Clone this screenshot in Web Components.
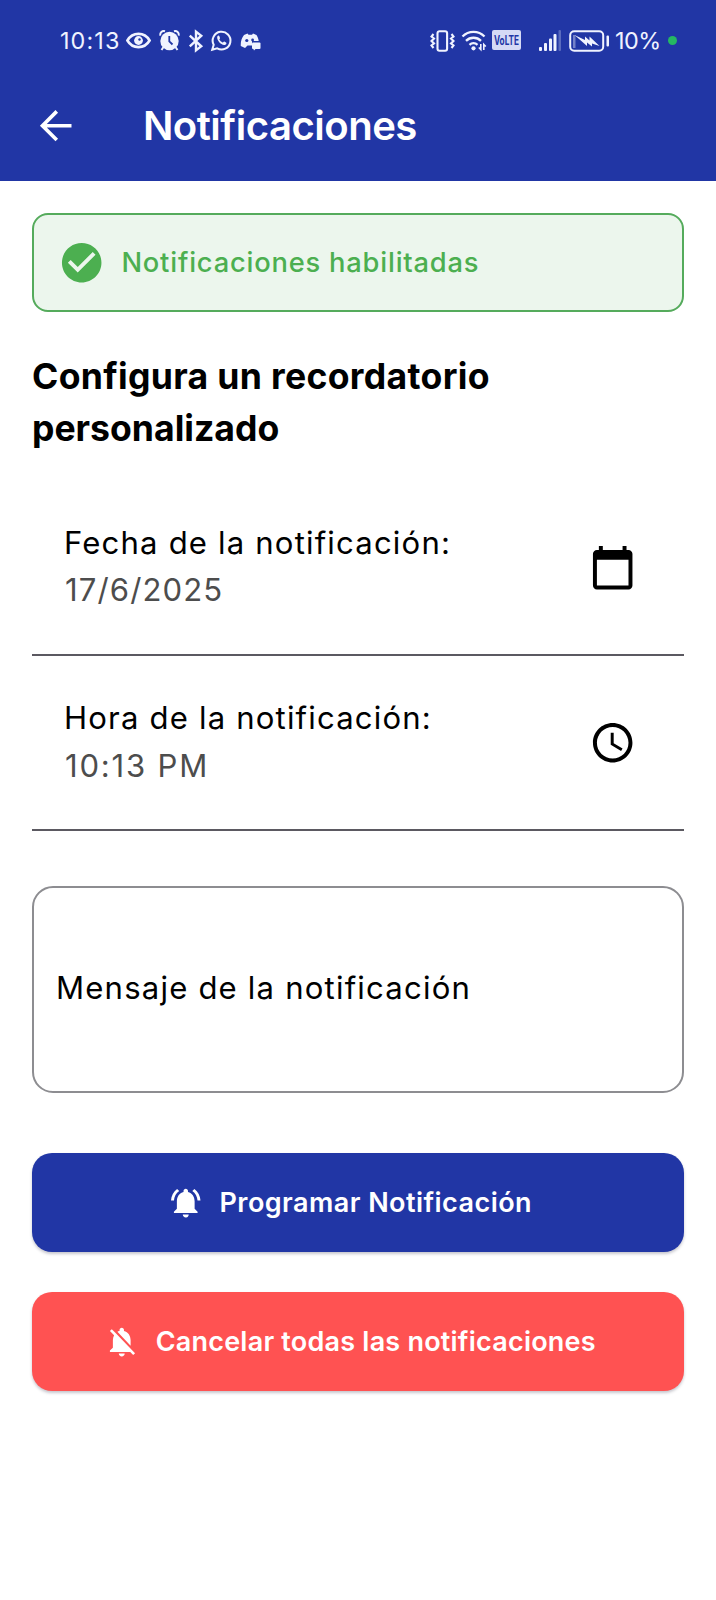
<!DOCTYPE html>
<html lang="es">
<head>
<meta charset="utf-8">
<title>Notificaciones</title>
<style>
body{margin:0;background:#fff;font-family:Inter,"Noto Sans",sans-serif;font-variant-ligatures:none;color:#000}
</style>
</head>
<body>
<notifications-page></notifications-page>
<script>
const define = (name, html) => {
  const template = document.createElement('template');
  template.innerHTML = html;
  customElements.define(name, class extends HTMLElement {
    constructor() {
      super();
      this.attachShadow({ mode: 'open' }).append(template.content.cloneNode(true));
    }
  });
};

const ICONS = {
  back: 'M20 11.100H7.500l5.700-5.700L11.900 4.100l-7.900 7.900 7.900 7.900 1.300-1.300L7.500 12.900H20v-1.800z',
  check: 'M12 2C6.480 2 2 6.480 2 12s4.480 10 10 10 10-4.480 10-10S17.520 2 12 2zm-2 15l-5-5 1.410-1.410L10 14.170l7.590-7.590L19 8l-9 9z',
  calendar: 'M20 3h-1V1h-2v2H7V1H5v2H4c-1.100 0-2 .9-2 2v16c0 1.100.9 2 2 2h16c1.100 0 2-.9 2-2V5c0-1.100-.9-2-2-2zm0 18H4V8h16v13z',
  clock: 'M11.990 2C6.470 2 2 6.480 2 12s4.470 10 9.990 10C17.520 22 22 17.520 22 12S17.520 2 11.990 2zM12 20c-4.420 0-8-3.580-8-8s3.580-8 8-8 8 3.580 8 8-3.580 8-8 8zm.5-13H11v6l5.250 3.150.75-1.230-4.500-2.670z',
  bell: 'M7.580 4.080L6.150 2.650C3.750 4.480 2.170 7.300 2.030 10.500h2c.15-2.650 1.510-4.970 3.550-6.420zm12.390 6.420h2c-.15-3.200-1.730-6.020-4.120-7.850l-1.420 1.430c2.020 1.450 3.390 3.770 3.540 6.420zM18 11c0-3.070-1.640-5.640-4.500-6.320V4c0-.83-.67-1.500-1.500-1.500s-1.500.67-1.500 1.500v.68C7.630 5.360 6 7.920 6 11v5l-2 2v1h16v-1l-2-2v-5zm-6 11c.14 0 .27-.01.4-.04.65-.14 1.180-.58 1.440-1.180.1-.24.15-.5.15-.78h-4c.01 1.100.9 2 2.010 2z',
  belloff: 'M20 18.690L7.840 6.140 5.270 3.490 4 4.760l2.800 2.800v.01c-.52.99-.8 2.160-.8 3.420v5l-2 2v1h13.730l2 2L21 19.720l-1-1.030zM12 22c1.110 0 2-.89 2-2h-4c0 1.110.89 2 2 2zm6-7.320V11c0-3.080-1.640-5.640-4.500-6.320V4c0-.83-.67-1.500-1.500-1.500s-1.500.67-1.500 1.500v.68c-.15.03-.29.08-.42.12-.1.03-.2.07-.3.11h-.01c-.01 0-.01 0-.02.01-.23.09-.46.2-.68.31 0 0-.01 0-.01.01L18 14.680z'
};

customElements.define('app-icon', class extends HTMLElement {
  connectedCallback() {
    if (this.shadowRoot) return;
    this.attachShadow({ mode: 'open' }).innerHTML = `
      <style>:host{display:block;flex:none;width:47.4px;height:47.4px}svg{display:block;width:100%;height:100%}</style>
      <svg viewBox="0 0 24 24" fill="currentColor"><path d="${ICONS[this.getAttribute('name')]}"/></svg>`;
  }
});

define('status-bar', `
<style>
:host{display:flex;align-items:center;box-sizing:border-box;height:70px;padding:11px 39px 0 60px;color:#f0f3ff}
svg{display:block;flex:none;overflow:visible}
.time,.pct{font-size:23.4px;line-height:28px;white-space:nowrap}
.time{width:59px;letter-spacing:1.1px}
.pct{width:44px;letter-spacing:-.45px;margin-left:5px}
.right{display:flex;align-items:center;margin-left:auto}
.dot{width:9px;height:9px;border-radius:50%;background:#25b862;margin-left:9px}
</style>
<span class="time">10:13</span>
<svg style="margin-left:7px" width="25" height="17" viewBox="0 0 25 16" fill="none" stroke="currentColor" stroke-width="2.6"><path d="M1.4 8C4 3.6 8 1.4 12.5 1.4S21 3.6 23.6 8C21 12.400 17 14.600 12.500 14.600S4 12.400 1.400 8z"/><circle cx="12.500" cy="8" r="4.400" fill="currentColor" stroke="none"/><circle cx="13.500" cy="7" r="1.200" fill="#2136a5" stroke="none"/></svg>
<svg style="margin-left:8px;margin-top:-1px" width="21" height="21" viewBox="0 0 21 21" fill="currentColor"><circle cx="10.500" cy="11" r="9.200"/><path d="M1.200 5.600A3.700 3.700 0 0 1 6 1.300M15 1.300a3.700 3.700 0 0 1 4.800 4.300M4.500 17l-2 3M16.500 17l2 3" fill="none" stroke="currentColor" stroke-width="2"/><path d="M10.300 6v5.300l3.200 3.200" fill="none" stroke="#2136a5" stroke-width="1.800"/></svg>
<svg style="margin-left:8px" width="16" height="22" viewBox="0 0 16 23" fill="none" stroke="currentColor" stroke-width="2.500"><path d="M1.500 6l12 11-5.500 4.300V1.700L13.500 6l-12 11"/></svg>
<svg style="margin-left:7px" width="21" height="21" viewBox="0 0 21 21" fill="none" stroke="currentColor" stroke-width="2"><path d="M1.200 19.800l1.500-5A8.900 8.900 0 1 1 6.200 18.400z"/><path d="M6.300 6.500c.8-1.500 1.800-1 2.100-.2l.6 1.600c.2.600-.9 1.300-.7 1.700.8 1.400 1.900 2.400 3.300 3 .5.200 1.100-1.300 1.700-1l1.700.8c.9.500.3 1.900-.8 2.400-3.500 1.300-9-4.700-7.900-8.300z" fill="currentColor" stroke="none"/></svg>
<svg style="margin-left:8px;margin-top:2px" width="21" height="17" viewBox="0 0 21 17" fill="currentColor"><path d="M4 2L7.500.5l1 1.300h3.500L13 .5 16.500 2c1.200 1.800 2 4 2.200 6H12v4.500H7.500L5 15 .8 13C.5 9 1.500 5 4 2z"/><circle cx="6.800" cy="7.500" r="1.600" fill="#2136a5"/><circle cx="12.600" cy="7" r="1.400" fill="#2136a5"/><rect x="12" y="9.500" width="8.500" height="6.500" rx="1"/><path d="M13 15l1 2.500 2-2z"/></svg>
<div class="right">
<svg width="25" height="22" viewBox="0 0 25 22" fill="none" stroke="currentColor" stroke-width="2.100"><rect x="7.500" y="1.200" width="9.600" height="19.600" rx="2"/><path d="M3.500 4L1.500 6.500l2.500 2-2.500 2.500L4 13.500l-2.500 2 2 2.500M21.500 4l2 2.500-2.500 2 2.500 2.500-2.500 2.500 2.500 2-2 2.500"/></svg>
<svg style="margin-left:7px" width="25" height="21" viewBox="0 0 25 21" fill="none" stroke="currentColor" stroke-width="2.300"><path d="M.5 6.500a15.500 15.500 0 0 1 22 0M4 10.800a10.800 10.800 0 0 1 15 0M7.500 14.800a6 6 0 0 1 8 0"/><circle cx="11.500" cy="18.300" r="2.100" fill="currentColor" stroke="none"/><path d="M18.800 14v5.500l-2-2M21.800 20v-5.500l2 2" stroke-width="1.600"/></svg>
<svg style="margin-left:5px;margin-top:-1px" width="29" height="20" viewBox="0 0 29 20"><rect width="29" height="20" rx="2" fill="#d5daf5"/><text x="2" y="14.500" textLength="25" lengthAdjust="spacingAndGlyphs" font-size="12.500" font-weight="700" fill="#2136a5">VoLTE</text></svg>
<svg style="margin-left:18px" width="23" height="21" viewBox="0 0 23 21" fill="currentColor"><rect y="17" width="3" height="4" rx="1"/><rect x="5" y="13" width="3" height="8" rx="1"/><rect x="10" y="8.500" width="3" height="12.500" rx="1"/><rect x="14.500" y="4" width="3" height="17" rx="1"/><rect x="19.500" width="2.500" height="21" rx="1" opacity=".28"/></svg>
<svg style="margin-left:7px" width="41" height="22" viewBox="0 0 41 22"><rect x="1.200" y="1.200" width="33" height="19.600" rx="4" fill="none" stroke="currentColor" stroke-width="2"/><rect x="4" y="5" width="2.500" height="13" fill="currentColor" opacity=".4"/><path d="M5.500 5l10.500 5V6.500l4.500 4V6.500L30.500 16l-7.500-2.500v3l-5-4v3.500z" fill="currentColor"/><rect x="37.500" y="5.500" width="2.500" height="11" rx="1" fill="currentColor"/></svg>
<span class="pct">10%</span><span class="dot"></span>
</div>`);

define('app-bar', `
<style>
:host{display:block;height:181px;background:#2136a5;color:#fff}
.bar{display:flex;align-items:center;height:111px;padding-left:32px}
h1{margin:0 0 0 63.5px;font-size:40.1px;line-height:48px;font-weight:640;letter-spacing:-.5px;white-space:nowrap}
</style>
<status-bar></status-bar>
<div class="bar"><app-icon name="back"></app-icon><h1><slot></slot></h1></div>`);

define('status-banner', `
<style>
:host{display:flex;align-items:center;box-sizing:border-box;height:99px;border:2px solid #55ab5c;border-radius:16px;background:#ecf6ed;color:#4caf50;padding-left:24px}
span{font-size:27.300px;line-height:36px;font-weight:460;letter-spacing:.8px;margin-left:16px;white-space:nowrap}
</style>
<app-icon name="check"></app-icon><span><slot></slot></span>`);

define('picker-row', `
<style>
:host{display:flex;align-items:center;justify-content:space-between;box-sizing:border-box;height:175.200px;padding:0 48px 0 32px;border-bottom:2px solid #5b5961}
.text{font-size:31.100px;line-height:47.800px;letter-spacing:1.170px;white-space:nowrap}
.value{color:#4d4d4d;letter-spacing:var(--value-spacing,1px);padding-left:1px}
.value ::slotted(*){display:block}
</style>
<div class="text"><div><slot></slot></div><div class="value"><slot name="value"></slot></div></div>
<slot name="icon"></slot>`);

define('message-field', `
<style>
:host{display:flex;align-items:center;box-sizing:border-box;height:206.500px;border:2px solid #8d8d91;border-radius:21px;padding:0 22px 4px;font-size:31.100px;line-height:44px;letter-spacing:1.190px;white-space:nowrap}
</style>
<slot></slot>`);

define('action-button', `
<style>
:host{display:flex;align-items:center;justify-content:center;box-sizing:border-box;height:99.500px;border-radius:20px;background:var(--fill);color:#fff;font-size:27px;line-height:36px;font-weight:620;white-space:nowrap;box-shadow:0 2px 3px rgba(30,30,60,.25)}
::slotted(app-icon){width:35.500px;height:35.500px;margin-right:16px}
span{letter-spacing:var(--spacing)}
</style>
<slot name="icon"></slot><span><slot></slot></span>`);

define('notifications-page', `
<style>
:host{display:block;min-height:1600px;background:#fff}
main{display:block;padding:32px 32px 0}
h2{margin:39.300px 0 26px;font-size:35.600px;line-height:51.800px;font-weight:650;letter-spacing:.32px}
h2 span{letter-spacing:0}
message-field{margin-top:55px}
.actions{display:grid;gap:39.700px;margin-top:60px}
.primary{--fill:#2136a5;--spacing:.45px;padding-right:16px}
.danger{--fill:#ff5252;--spacing:.22px;padding-right:16px}
</style>
<app-bar>Notificaciones</app-bar>
<main>
<status-banner>Notificaciones habilitadas</status-banner>
<h2>Configura un recordatorio<br><span>personalizado</span></h2>
<picker-row style="--value-spacing:1.1px">Fecha de la notificación:<span slot="value">17/6/2025</span><app-icon slot="icon" name="calendar"></app-icon></picker-row>
<picker-row style="--value-spacing:1.8px">Hora de la notificación:<span slot="value">10:13 PM</span><app-icon slot="icon" name="clock"></app-icon></picker-row>
<message-field>Mensaje de la notificación</message-field>
<div class="actions">
<action-button class="primary"><app-icon slot="icon" name="bell"></app-icon>Programar Notificación</action-button>
<action-button class="danger"><app-icon slot="icon" name="belloff"></app-icon>Cancelar todas las notificaciones</action-button>
</div>
</main>`);
</script>
</body>
</html>
